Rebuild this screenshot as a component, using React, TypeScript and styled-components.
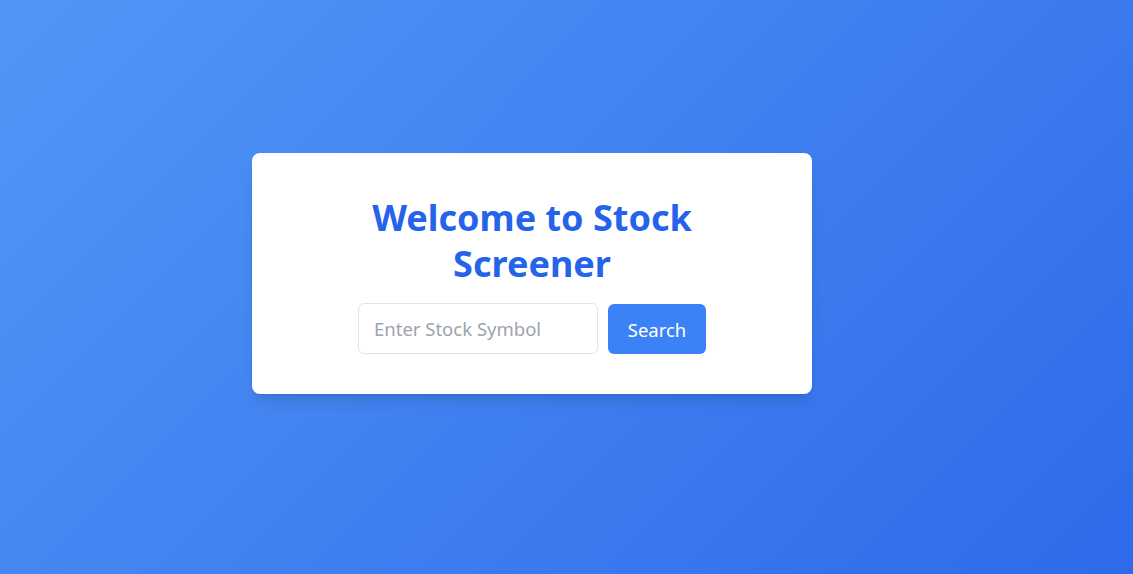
import React from "react";
import styled, { createGlobalStyle } from "styled-components";

const GlobalStyle = createGlobalStyle`
  html, body { margin: 0; padding: 0; }
  body { font-family: "Noto Sans", "Open Sans", sans-serif; }
  * { box-sizing: border-box; }
`;

const Page = styled.div`
  width: 100%;
  min-height: 574px;
  padding: 0 69px 27px 0;
  display: flex;
  align-items: center;
  justify-content: center;
  background: linear-gradient(135deg, #5197f6 0%, #2e6aea 100%);
`;

const Card = styled.div`
  width: 560px;
  padding: 40px 40px 40px;
  background: #ffffff;
  border-radius: 8px;
  box-shadow: 0 10px 15px -3px rgba(0, 0, 0, 0.1), 0 4px 6px -4px rgba(0, 0, 0, 0.1);
  display: flex;
  flex-direction: column;
  align-items: center;
`;

const Title = styled.h1`
  margin: 2px 0 16px;
  max-width: 400px;
  text-align: center;
  font-size: 36px;
  line-height: 46px;
  font-weight: 700;
  color: #2563eb;
`;

const Form = styled.form`
  display: flex;
  gap: 10px;
  align-items: flex-start;
`;

const Input = styled.input`
  width: 240px;
  height: 51px;
  padding: 0 15px;
  border: 1px solid #e3e4e8;
  border-radius: 6px;
  font-family: inherit;
  font-size: 18.5px;
  color: #111827;
  outline: none;
  &::placeholder { color: #9ca3af; }
`;

const Button = styled.button`
  width: 98px;
  height: 50px;
  margin-top: 1px;
  border: none;
  border-radius: 6px;
  background: #3b82f6;
  color: #ffffff;
  font-family: inherit;
  font-size: 18.5px;
  cursor: pointer;
`;

export default function App() {
  return (
    <>
      <GlobalStyle />
      <Page>
        <Card>
          <Title>Welcome to Stock Screener</Title>
          <Form onSubmit={(e) => e.preventDefault()}>
            <Input placeholder="Enter Stock Symbol" />
            <Button type="submit">Search</Button>
          </Form>
        </Card>
      </Page>
    </>
  );
}
